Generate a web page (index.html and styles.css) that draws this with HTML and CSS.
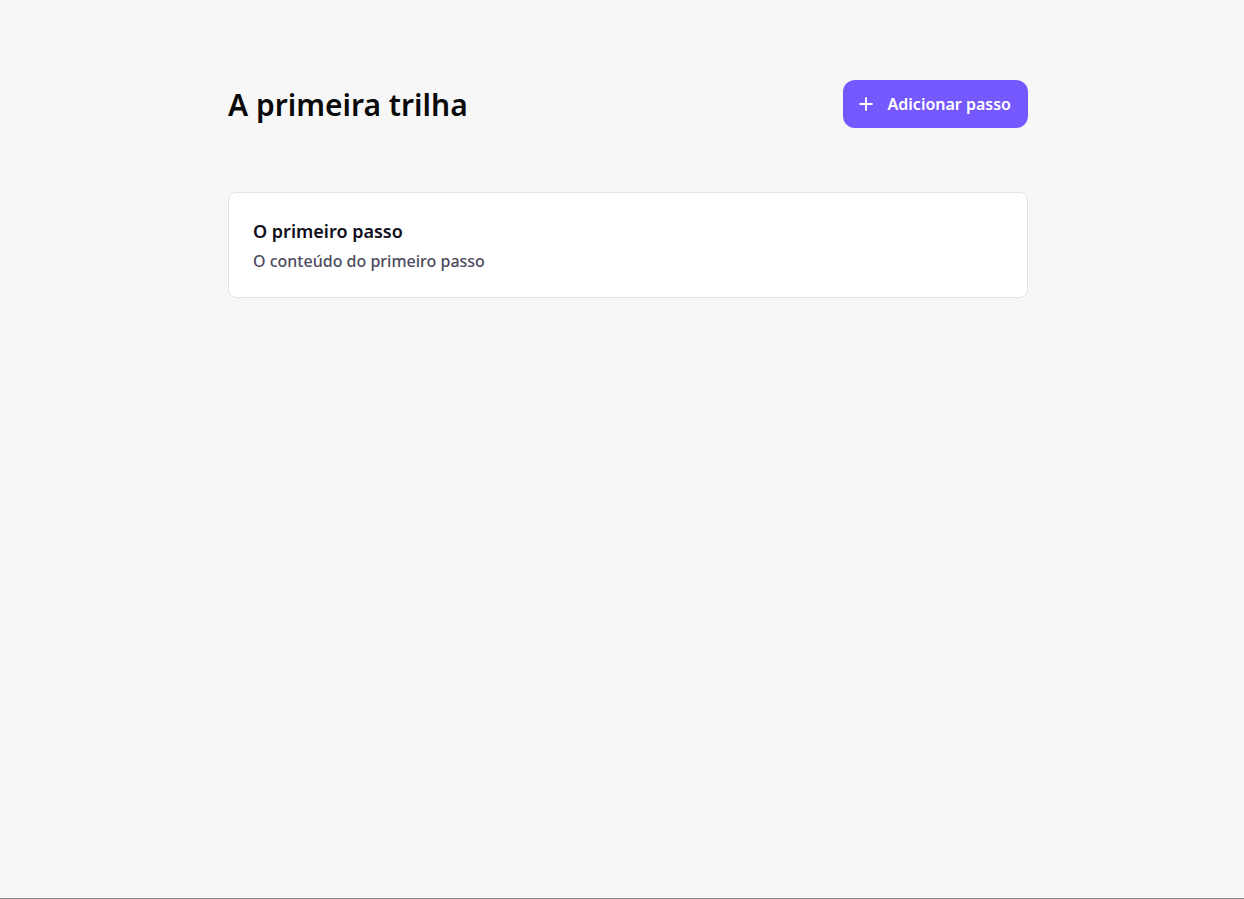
FILE: index.html
```html
<!DOCTYPE html>
<html lang="pt">
<head>
<meta charset="utf-8">
<title>A primeira trilha</title>
<link rel="stylesheet" href="styles.css">
</head>
<body>
<main class="page">
  <header class="header">
    <h1 class="title">A primeira trilha</h1>
    <button class="btn-add" type="button">
      <svg class="btn-icon" width="14" height="14" viewBox="0 0 14 14" aria-hidden="true">
        <path d="M7 1v12M1 7h12" stroke="#fff" stroke-width="1.8" stroke-linecap="round" fill="none"/>
      </svg>
      <span>Adicionar passo</span>
    </button>
  </header>
  <section class="steps">
    <article class="step-card">
      <h2 class="step-title">O primeiro passo</h2>
      <p class="step-text">O conteúdo do primeiro passo</p>
    </article>
  </section>
</main>
</body>
</html>
```

FILE: styles.css
```css
html, body {
  margin: 0;
  padding: 0;
}
html {
  height: 899px;
  box-sizing: border-box;
  border-bottom: 1px solid #8a8a8a;
  background: #f7f7f7;
}
body {
  font-family: "Noto Sans", "Open Sans", sans-serif;
  color: #0f0f14;
  background: #f7f7f7;
}
.page {
  width: 800px;
  margin: 0 auto;
  padding: 80px 0 0 12px;
}
.header {
  display: flex;
  align-items: center;
  justify-content: space-between;
  height: 48px;
}
.title {
  margin: 0;
  font-size: 30px;
  font-weight: 600;
  color: #0a0a0a;
}
.btn-add {
  display: flex;
  align-items: center;
  gap: 15px;
  height: 48px;
  padding: 0 17px 0 16px;
  border: none;
  border-radius: 12px;
  background: #7559ff;
  color: #fff;
  font-family: inherit;
  font-size: 16px;
  font-weight: 600;
  cursor: pointer;
}
.btn-icon {
  display: block;
}
.steps {
  margin-top: 64px;
}
.step-card {
  background: #fff;
  border: 1px solid #e3e3e3;
  border-radius: 8px;
  padding: 24px 24px 24px;
}
.step-title {
  margin: 0;
  font-size: 18px;
  font-weight: 600;
  color: #0f0d1a;
  line-height: 28px;
}
.step-text {
  margin: 4px 0 0;
  font-size: 16px;
  font-weight: 500;
  color: #4d4a5e;
  line-height: 24px;
}
```
